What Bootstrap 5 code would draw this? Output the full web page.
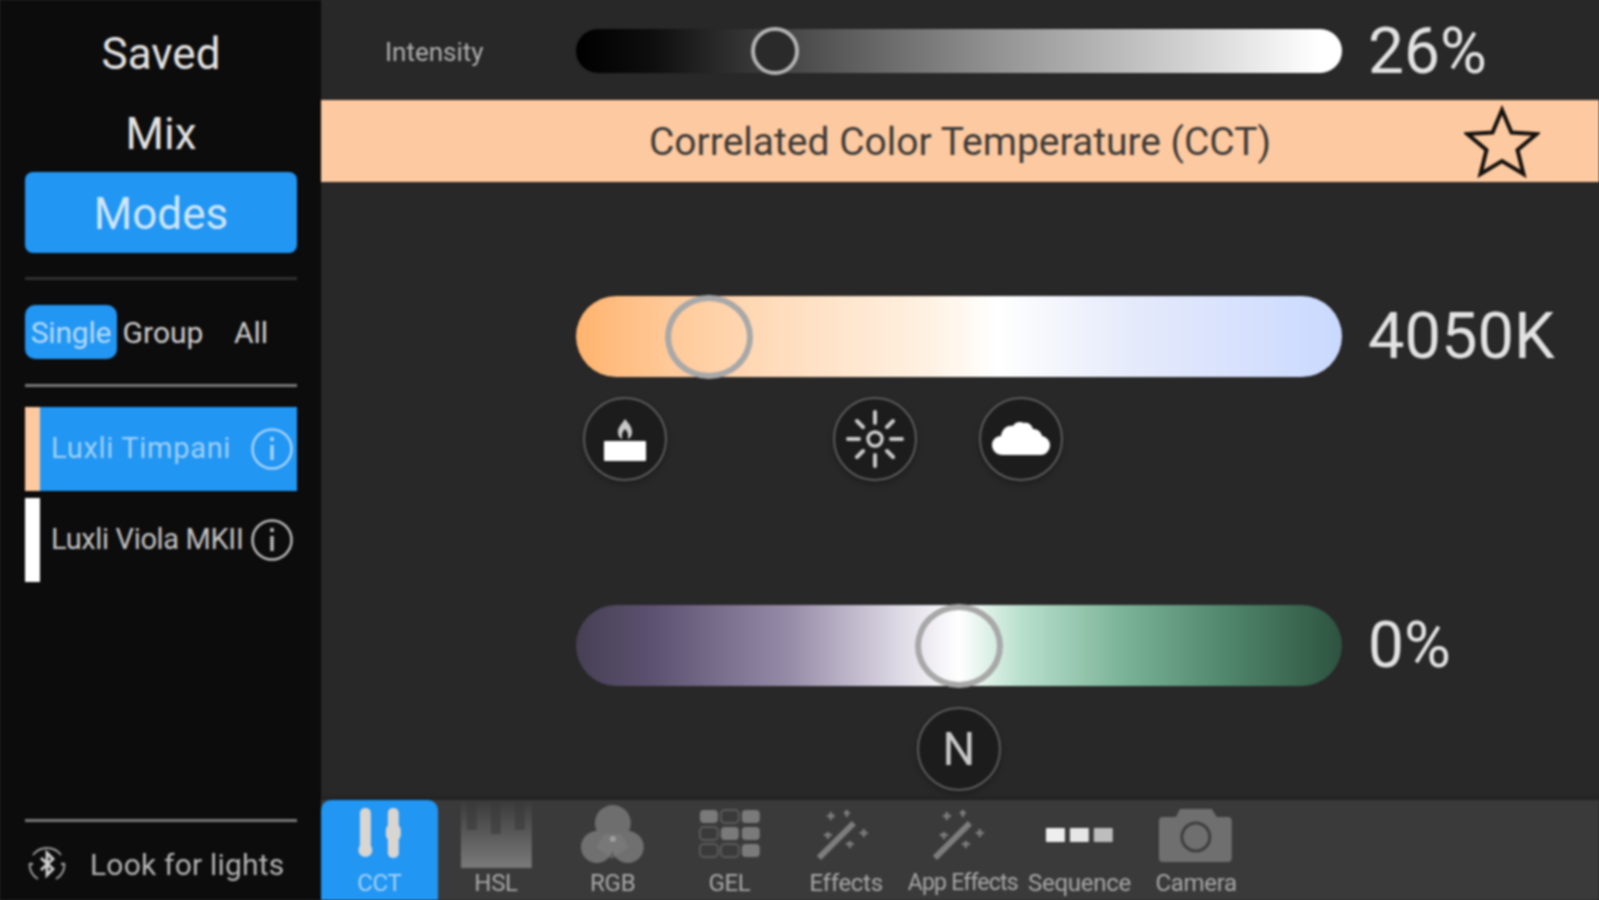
<!DOCTYPE html>
<html lang="en">

<head>
    <meta charset="UTF-8">
    <title>CCT</title>
    <link href="https://cdn.jsdelivr.net/npm/bootstrap@5.3.3/dist/css/bootstrap.min.css" rel="stylesheet">
    <style>
        html, body { height: 100%; margin: 0; background: #282828; overflow: hidden; }
        body { font-family: Roboto, "Liberation Sans", sans-serif; }
        .app-shell { width: 1599px; height: 900px; filter: blur(0.8px); }

        /* left column */
        .side-col { width: 321px; background: #0c0c0c; padding: 14px 24px 0 25px; color: #e4e4e4; }
        .side-item { height: 80px; font-size: 44px; }
        .side-item.is-on { height: 81px; margin-top: -2px; padding-top: 3px; background: #2196f3; color: #cfe6fa; border-radius: 8px; }
        .side-rule { height: 3px; background: #777; flex: none; }
        .side-rule.is-dim { background: #303030; }
        .scope-row { height: 54px; font-size: 30px; margin: 25px 0; color: #cfcfcf; padding-top: 1px; }
        .scope-pill { width: 92px; height: 54px; margin-top: -1px; background: #2196f3; color: #b5dbfa; border-radius: 10px; padding-top: 1px; letter-spacing: -0.2px; }
        .scope-mid { width: 92px; letter-spacing: 0; }
        .scope-all { width: 84px; }
        .light-row { height: 84px; font-size: 29px; color: #c4c4c4; white-space: nowrap; }
        .light-row + .light-row { margin-top: 7px; }
        .light-row.is-on { background: #2196f3; color: #9fd0f7; }
        .light-strip { width: 15px; align-self: stretch; background: #fff; flex: none; }
        .light-row.is-on .light-strip { background: #fdc9a0; }
        .light-name { margin-left: 11px; letter-spacing: -0.35px; flex: 1; overflow: hidden; }
        .light-row.is-on .light-name { letter-spacing: 0.7px; }
        .info-ico { width: 44px; height: 44px; flex: none; margin-right: 3px; }
        .find-row { height: 78px; font-size: 30px; color: #b5b5b5; padding-top: 6px; }
        .find-ico { margin-right: 21px; }
        .find-word { letter-spacing: 0.2px; }

        /* right column */
        .main-col { min-width: 0; }
        .level-row { height: 100px; padding-top: 1px; }
        .level-row .level-value { padding-top: 3px; }
        .level-name { width: 255px; padding: 3px 0 0 64px; font-size: 26px; color: #b0b0b0; letter-spacing: 0; }
        .level-value { margin-left: 26px; font-size: 64px; line-height: 1; color: #e2e2e2; white-space: nowrap; }
        .value-big { font-size: 65px; }
        .track { position: relative; width: 766px; border-radius: 999px; flex: none; }
        .track-sm { height: 44px; background: linear-gradient(90deg, #000 0%, #0e0e0e 10%, #4d4d4d 30%, #939393 55%, #cdcdcd 78%, #fff 97%); }
        .track-cct { height: 81px; background: linear-gradient(90deg, #ffb36e 0%, #ffc998 12%, #ffdcbc 26%, #fff0e0 45%, #ffffff 55%, #e6ebfb 72%, #c9d9ff 100%); }
        .track-tint { height: 81px; background: linear-gradient(90deg, #474054 0%, #5c5170 10%, #978ca8 28%, #dcd8e4 42%, #ffffff 50%, #b9e0cd 58%, #78b195 72%, #4d8368 86%, #2d5340 100%); }
        .knob { position: absolute; top: 50%; transform: translate(-50%, -50%); border-radius: 50%; }
        .knob-sm { width: 48px; height: 48px; border: 4px solid #b4b4b4; background: #2a2a2a; }
        .knob-lg { width: 88px; height: 84px; border: 6px solid #a8a8a8; }
        .mode-band { height: 82px; padding-top: 2px; background: #fdc9a0; color: #3d3a37; font-size: 39px; position: relative; }
        .star-ico { position: absolute; right: 59px; top: 4px; width: 76px; height: 74px; }
        .round-btn { width: 84px; height: 84px; border-radius: 50%; background: #1c1c1c; border: 2px solid #5c5c5c; flex: none; box-shadow: 0 3px 6px rgba(0,0,0,.3); }
        .round-btn svg { width: 60px; height: 60px; }
        .n-mark { font-size: 46px; color: #c9c9c9; line-height: 1; }
        .preset-row { margin: 20px 0 0 262px; width: 480px; }
        .cloud-gap { margin-left: 62px; }
        .n-row { margin: 21px 0 0 596px; }
        .slider-a { margin-top: 114px; }
        .slider-b { margin-top: 124px; }
        .slider-pad { padding-left: 255px; }

        /* bottom tabs */
        .tab-bar { height: 100px; background: #3a3a3a; margin-top: auto; box-shadow: 0 -3px 3px rgba(0,0,0,.15); }
        .tab-cell { width: 116.7px; height: 100px; color: #a8a8a8; font-size: 24px; flex: none; position: relative; }
        .tab-cell.is-on { background: #2196f3; color: #a6d3f8; border-radius: 10px 10px 0 0; }
        .tab-art { height: 69px; width: 100%; display: block; overflow: visible; }
        .tab-word { line-height: 28px; white-space: nowrap; letter-spacing: -0.3px; }
        .tab-word.is-tight { font-size: 23px; letter-spacing: -0.8px; }
    </style>
</head>

<body>

    <div class="app-shell d-flex">

        <aside class="side-col d-flex flex-column flex-shrink-0">
            <div class="side-item d-flex align-items-center justify-content-center">Saved</div>
            <div class="side-item d-flex align-items-center justify-content-center">Mix</div>
            <div class="side-item is-on d-flex align-items-center justify-content-center">Modes</div>
            <div class="side-rule is-dim mt-4"></div>

            <div class="scope-row d-flex align-items-center">
                <div class="scope-pill d-flex align-items-center justify-content-center">Single</div>
                <div class="scope-mid text-center">Group</div>
                <div class="scope-all text-center">All</div>
            </div>
            <div class="side-rule mb-3"></div>

            <div class="light-row is-on d-flex align-items-center mt-1">
                <div class="light-strip"></div>
                <div class="light-name">Luxli Timpani</div>
                <svg class="info-ico" viewBox="0 0 44 44" fill="none" stroke="#a6d3f8" stroke-width="2.5">
                    <circle cx="22" cy="22" r="19.5"/>
                    <path d="M22 18v15" stroke-width="3.5"/>
                    <path d="M22 10v4" stroke-width="3.5"/>
                </svg>
            </div>
            <div class="light-row d-flex align-items-center">
                <div class="light-strip"></div>
                <div class="light-name">Luxli Viola MKII</div>
                <svg class="info-ico" viewBox="0 0 44 44" fill="none" stroke="#bbb" stroke-width="2.5">
                    <circle cx="22" cy="22" r="19.5"/>
                    <path d="M22 18v15" stroke-width="3.5"/>
                    <path d="M22 10v4" stroke-width="3.5"/>
                </svg>
            </div>

            <div class="side-rule mt-auto"></div>
            <div class="find-row d-flex align-items-center">
                <svg width="44" height="44" viewBox="0 0 44 44" fill="none" stroke="#9a9a9a" stroke-width="2" class="find-ico flex-shrink-0">
                    <path d="M8 13A17.500 17.500 0 0 1 36 13M39.500 22A17.500 17.500 0 0 1 31 37M13 37A17.500 17.500 0 0 1 4.500 22"/>
                    <path d="M4 22h4M36 22h4" stroke-width="2.500"/>
                    <path d="M16 16l12 11-6 6V11l6 6-12 11" stroke="#d0d0d0" stroke-width="2.800"/>
                </svg>
                <span class="find-word text-nowrap">Look for lights</span>
            </div>
        </aside>

        <main class="main-col d-flex flex-column flex-grow-1">
            <div class="level-row d-flex align-items-center">
                <div class="level-name">Intensity</div>
                <div class="track track-sm">
                    <div class="knob knob-sm" style="left: 26%"></div>
                </div>
                <div class="level-value">26%</div>
            </div>

            <div class="mode-band d-flex align-items-center justify-content-center">
                <span>Correlated Color Temperature (CCT)</span>
                <svg class="star-ico" viewBox="0 0 76 74" fill="none" stroke="#15120f" stroke-width="4" stroke-linejoin="miter">
                    <path d="M38 6l9.500 22.500 25 1.500-19 16 6 24L38 57 16.500 70l6-24-19-16 25-1.500z"/>
                </svg>
            </div>

            <div class="slider-a slider-pad d-flex align-items-center">
                <div class="track track-cct">
                    <div class="knob knob-lg" style="left: 17.400%"></div>
                </div>
                <div class="level-value value-big">4050K</div>
            </div>

            <div class="preset-row d-flex">
                <div class="round-btn d-flex align-items-center justify-content-center">
                    <svg viewBox="0 0 60 60">
                        <rect x="9" y="32" width="42" height="20" rx="1" fill="#fff"/>
                        <path d="M30 10c4 5 7 8 7 13 0 4-2 6-4 7v-4c0-2-1-4-3-6-2 2-3 4-3 6v4c-2-1-4-3-4-7 0-5 4-8 7-13z" fill="#c8c8c8"/>
                    </svg>
                </div>
                <div class="round-btn d-flex align-items-center justify-content-center ms-auto">
                    <svg viewBox="0 0 60 60" fill="none" stroke="#c8c8c8" stroke-width="4" stroke-linecap="round">
                        <circle cx="30" cy="30" r="7" stroke="#ccc" stroke-width="3.500"/>
                        <path d="M30 3v11M30 46v11M3 30h11M46 30h11M12 12l6 6M42 42l6 6M48 12l-6 6M18 42l-6 6"/>
                    </svg>
                </div>
                <div class="round-btn d-flex align-items-center justify-content-center cloud-gap">
                    <svg viewBox="0 0 60 60">
                        <path d="M12 46C5 46 1 41 1 36c0-5 4-9 9-9 1-7 6-11 12-10 2-4 7-5 11-3 4-1 8 2 9 6 5 0 8 3 9 7 5 1 8 5 8 9 0 5-4 10-9 10z" fill="#fff"/>
                    </svg>
                </div>
            </div>

            <div class="slider-b slider-pad d-flex align-items-center">
                <div class="track track-tint">
                    <div class="knob knob-lg" style="left: 50%"></div>
                </div>
                <div class="level-value">0%</div>
            </div>

            <div class="n-row">
                <div class="round-btn d-flex align-items-center justify-content-center">
                    <span class="n-mark">N</span>
                </div>
            </div>

            <div class="tab-bar d-flex">
                <div class="tab-cell is-on text-center">
                    <svg class="tab-art" viewBox="0 0 117 69" fill="#d9d5d1">
                        <rect x="39" y="8" width="11" height="44" rx="5"/>
                        <circle cx="44.500" cy="50" r="7"/>
                        <rect x="67" y="8" width="11" height="50" rx="5"/>
                        <rect x="65" y="24" width="15" height="17" rx="6"/>
                    </svg>
                    <div class="tab-word">CCT</div>
                </div>
                <div class="tab-cell text-center">
                    <svg class="tab-art" viewBox="0 0 117 69">
                        <defs>
                            <linearGradient id="hslFade" x1="0" y1="0" x2="0" y2="1">
                                <stop offset="0" stop-color="#3a3a3a"/>
                                <stop offset="1" stop-color="#7a7a7a"/>
                            </linearGradient>
                        </defs>
                        <rect x="23" y="0" width="71" height="68" fill="url(#hslFade)"/>
                        <path d="M34 0v30M58 0v34M82 0v30" stroke="#3a3a3a" stroke-width="10" opacity=".6"/>
                    </svg>
                    <div class="tab-word">HSL</div>
                </div>
                <div class="tab-cell text-center">
                    <svg class="tab-art" viewBox="0 0 117 69" fill="#707070">
                        <circle cx="59" cy="23" r="18" fill="#6e6e6e"/>
                        <circle cx="43" cy="47" r="16"/>
                        <circle cx="74" cy="47" r="16"/>
                        <path d="M51 34l16 0 8 13-17 12-16-12z" fill="#808080" opacity=".5"/>
                        <circle cx="59" cy="39" r="3" fill="#a0a0a0"/>
                    </svg>
                    <div class="tab-word">RGB</div>
                </div>
                <div class="tab-cell text-center">
                    <svg class="tab-art" viewBox="0 0 117 69" fill="#7a7a7a">
                        <rect x="29" y="10" width="18" height="13" rx="4"/>
                        <rect x="50" y="10" width="18" height="13" rx="4" fill="none" stroke="#5a5a5a" stroke-width="2"/>
                        <rect x="71" y="10" width="18" height="13" rx="4"/>
                        <rect x="29" y="27" width="18" height="13" rx="4" fill="none" stroke="#5a5a5a" stroke-width="2"/>
                        <rect x="50" y="27" width="18" height="13" rx="4"/>
                        <rect x="71" y="27" width="18" height="13" rx="4"/>
                        <rect x="29" y="44" width="18" height="13" rx="4" fill="none" stroke="#5a5a5a" stroke-width="2"/>
                        <rect x="50" y="44" width="18" height="13" rx="4" fill="none" stroke="#5a5a5a" stroke-width="2"/>
                        <rect x="71" y="44" width="18" height="13" rx="4"/>
                    </svg>
                    <div class="tab-word">GEL</div>
                </div>
                <div class="tab-cell text-center">
                    <svg class="tab-art" viewBox="0 0 117 69" fill="none" stroke="#7d7d7d" stroke-width="2.500">
                        <path d="M31 58l35-35" stroke-width="6"/>
                        <path d="M43 12v8M39 16h8M59 10v7M56 13h6M40 32v7M36 35h8M76 29v8M72 33h8M62 41v7M58 44h8"/>
                    </svg>
                    <div class="tab-word">Effects</div>
                </div>
                <div class="tab-cell text-center">
                    <svg class="tab-art" viewBox="0 0 117 69" fill="none" stroke="#7d7d7d" stroke-width="2.500">
                        <path d="M31 58l35-35" stroke-width="6"/>
                        <path d="M43 12v8M39 16h8M59 10v7M56 13h6M40 32v7M36 35h8M76 29v8M72 33h8M62 41v7M58 44h8"/>
                    </svg>
                    <div class="tab-word is-tight">App Effects</div>
                </div>
                <div class="tab-cell text-center">
                    <svg class="tab-art" viewBox="0 0 117 69">
                        <rect x="25" y="28" width="19" height="14" rx="1" fill="#eee"/>
                        <rect x="49" y="28" width="19" height="14" rx="1" fill="#e6e6e6"/>
                        <rect x="73" y="28" width="19" height="14" rx="1" fill="#bdbdbd"/>
                    </svg>
                    <div class="tab-word">Sequence</div>
                </div>
                <div class="tab-cell text-center">
                    <svg class="tab-art" viewBox="0 0 117 69">
                        <path d="M25 17h13l4-8h32l5 8h11a4 4 0 0 1 4 4v37a4 4 0 0 1-4 4H25a4 4 0 0 1-4-4V21a4 4 0 0 1 4-4z" fill="#6f6f6f"/>
                        <circle cx="58" cy="37" r="14" fill="none" stroke="#3e3e3e" stroke-width="3"/>
                    </svg>
                    <div class="tab-word">Camera</div>
                </div>
            </div>
        </main>
    </div>

    <script src="https://cdn.jsdelivr.net/npm/bootstrap@5.3.3/dist/js/bootstrap.bundle.min.js"></script>
</body>

</html>
